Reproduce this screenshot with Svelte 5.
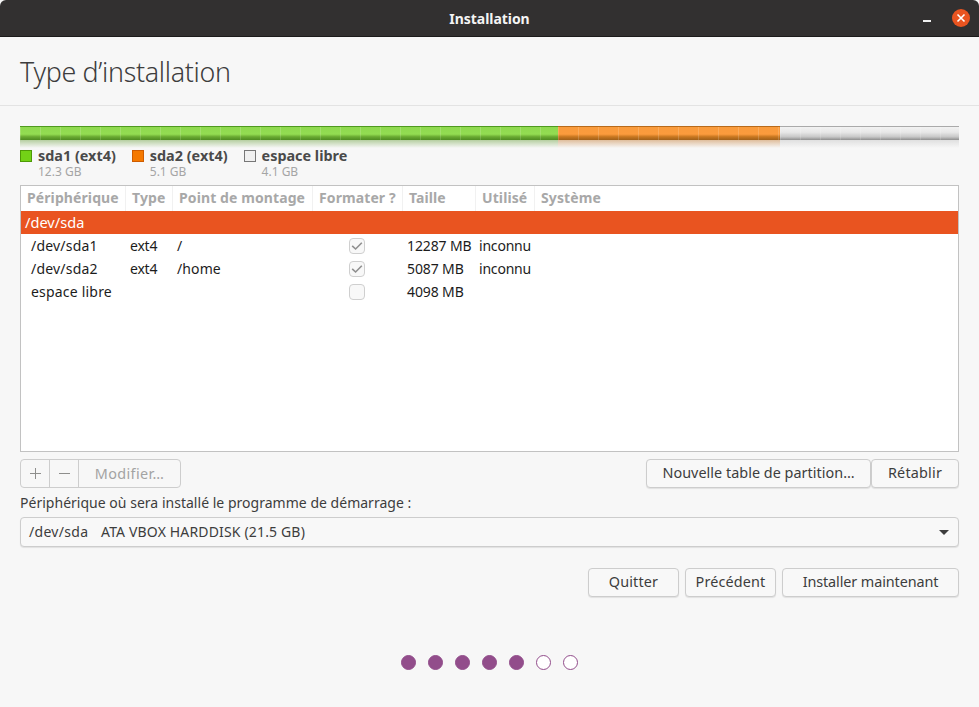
<script>
  const cols = ['Périphérique', 'Type', 'Point de montage', 'Formater ?', 'Taille', 'Utilisé', 'Système'];
  const rows = [
    { dev: '/dev/sda1', type: 'ext4', mount: '/', fmt: true, size: '12287 MB', used: 'inconnu' },
    { dev: '/dev/sda2', type: 'ext4', mount: '/home', fmt: true, size: '5087 MB', used: 'inconnu' },
    { dev: 'espace libre', type: '', mount: '', fmt: false, size: '4098 MB', used: '' }
  ];
  const legend = [
    { name: 'sda1 (ext4)', size: '12.3 GB', cls: 'green' },
    { name: 'sda2 (ext4)', size: '5.1 GB', cls: 'orange' },
    { name: 'espace libre', size: '4.1 GB', cls: 'free' }
  ];
  const dots = [1, 1, 1, 1, 1, 0, 0];
</script>

<div class="win">
  <header class="titlebar">
    <span class="wintitle">Installation</span>
    <span class="min"></span>
    <span class="close">
      <svg width="10" height="10" viewBox="0 0 10 10"><path d="M1.5 1.5l7 7M8.5 1.5l-7 7" stroke="#fff" stroke-width="1.6" fill="none"/></svg>
    </span>
  </header>

  <div class="heading"><h1>Type d’installation</h1></div>

  <main class="body">
    <div class="bar">
      <div class="seg g"></div>
      <div class="seg o"></div>
      <div class="seg f"></div>
    </div>

    <div class="legend">
      {#each legend as l}
        <div class="litem">
          <span class="swatch {l.cls}"></span>
          <div>
            <div class="lname">{l.name}</div>
            <div class="lsize">{l.size}</div>
          </div>
        </div>
      {/each}
    </div>

    <div class="table">
      <div class="thead row">
        {#each cols as c}<div class="th">{c}</div>{/each}
      </div>
      <div class="selected">/dev/sda</div>
      {#each rows as r}
        <div class="row tr">
          <div class="td dev">{r.dev}</div>
          <div class="td">{r.type}</div>
          <div class="td mount">{r.mount}</div>
          <div class="td chk">
            <span class="check">
              {#if r.fmt}<svg width="12" height="10" viewBox="0 0 12 10"><path d="M1.2 4.8l3.4 3.2L10.8 1.8" stroke="#8f8f8f" stroke-width="1.6" fill="none"/></svg>{/if}
            </span>
          </div>
          <div class="td size">{r.size}</div>
          <div class="td used">{r.used}</div>
          <div class="td"></div>
        </div>
      {/each}
    </div>

    <div class="tools">
      <div class="group">
        <span class="gbtn icon">
          <svg width="11" height="11" viewBox="0 0 11 11"><path d="M5.5 0v11M0 5.5h11" stroke="#8e8e8c" stroke-width="1"/></svg>
        </span>
        <span class="gbtn icon">
          <svg width="11" height="11" viewBox="0 0 11 11"><path d="M0 5.5h11" stroke="#8e8e8c" stroke-width="1"/></svg>
        </span>
        <span class="gbtn mod">Modifier…</span>
      </div>
      <div class="right">
        <button class="btn newtable">Nouvelle table de partition…</button>
        <button class="btn reset">Rétablir</button>
      </div>
    </div>

    <div class="bootlabel">Périphérique où sera installé le programme de démarrage :</div>
    <div class="combo">
      <span class="cdev">/dev/sda</span><span class="cname">ATA VBOX HARDDISK (21.5 GB)</span>
      <span class="arrow"></span>
    </div>

    <div class="actions">
      <button class="btn quit">Quitter</button>
      <button class="btn prev">Précédent</button>
      <button class="btn install">Installer maintenant</button>
    </div>

    <div class="dots">
      {#each dots as d}<span class="dot" class:on={d}></span>{/each}
    </div>
  </main>
</div>

<style>
  :global(body) { margin: 0; background: #f7f7f7; }
  .win {
    width: 979px; height: 707px; background: #f7f7f7; overflow: hidden;
    font-family: "Noto Sans", "Open Sans", sans-serif; font-size: 14px; color: #3d3d3d;
    display: flex; flex-direction: column;
  }
  .titlebar {
    height: 36px; flex: none; background: #323030; border-bottom: 1px solid #1c1b1b;
    border-radius: 6px 6px 0 0; display: flex; align-items: center; justify-content: center; position: relative;
  }
  .wintitle { color: #f4f4f4; font-weight: 700; font-size: 14px; letter-spacing: -0.05px; }
  .min { position: absolute; left: 923px; top: 20px; width: 8px; height: 1.5px; background: #f0f0f0; }
  .close {
    position: absolute; left: 952px; top: 9px; width: 18px; height: 18px; border-radius: 50%;
    background: #e95420; display: flex; align-items: center; justify-content: center;
  }
  .heading { height: 69px; flex: none; border-bottom: 1px solid #e3e3e3; box-sizing: border-box; display: flex; align-items: center; padding-left: 20px; }
  h1 { margin: 0; font-size: 26.8px; font-weight: 300; color: #3d3d3d; font-family: "Noto Sans", sans-serif; letter-spacing: -0.3px; white-space: nowrap; }
  .body { padding: 20px 20px 0; flex: 1; display: flex; flex-direction: column; }

  .bar { display: flex; height: 14px; position: relative; }
  .seg { height: 14px; position: relative; box-sizing: border-box; border-top: 1px solid; }
  .seg::before {
    content: ""; position: absolute; inset: 0;
    background: repeating-linear-gradient(90deg, rgba(255,255,255,.16) 0 1px, transparent 1px 20px);
  }
  .seg::after { content: ""; position: absolute; left: 0; right: 0; top: 13px; height: 8px; }
  .g { width: 538px; border-color: #4f9a1f; background: linear-gradient(#8fd94f 0, #93dc52 55%, #6aaa32 75%, #4f8c22 100%); }
  .g::after { background: linear-gradient(rgba(90,150,40,.42), rgba(120,200,60,0)); }
  .o { width: 222px; border-color: #b86a1a; background: linear-gradient(#f99b3c 0, #fb9b3d 55%, #c87720 75%, #a0601a 100%); }
  .o::after { background: linear-gradient(rgba(190,110,30,.42), rgba(240,140,50,0)); }
  .f { width: 179px; border-color: #aaa; background: linear-gradient(#f2f2f2 0, #e8e8e8 40%, #c8c8c8 75%, #8e8e8e 100%); }
  .f::after { background: linear-gradient(rgba(140,140,140,.22), rgba(200,200,200,0)); }

  .legend { display: flex; height: 45px; padding-top: 8px; box-sizing: border-box; line-height: 16px; }
  .litem { display: flex; gap: 6px; margin-right: 16px; }
  .swatch { width: 12px; height: 12px; box-sizing: border-box; border: 1px solid; margin-top: 2px; flex: none; }
  .green { background: #73d216; border-color: #4e9a06; }
  .orange { background: #f57900; border-color: #ce5c00; }
  .free { background: #f0f0f0; border-color: #777; }
  .lname { font-weight: 700; font-size: 14.4px; color: #4a4a4a; white-space: nowrap; }
  .lsize { font-size: 12px; color: #a5a5a5; }

  .table { height: 267px; box-sizing: border-box; flex: none; border: 1px solid #c2c2c2; background: #fff; }
  .row { display: grid; grid-template-columns: 105px 47px 140px 90px 73px 59px 1fr; }
  .thead { height: 25px; }
  .th { font-weight: 700; font-size: 14px; color: #a8a8a8; padding-left: 6px; line-height: 24px; border-right: 1px solid #f1f1f1; white-space: nowrap; letter-spacing: 0.1px; }
  .th:last-child { border-right: 0; }
  .selected { height: 23px; background: #e95420; color: #fff; line-height: 23px; padding-left: 4px; font-size: 14.6px; }
  .tr { height: 23px; }
  .td { line-height: 23px; color: #1c1c1c; padding-left: 4px; font-size: 14px; white-space: nowrap; letter-spacing: -0.2px; }
  .dev { padding-left: 10px; letter-spacing: 0.2px; }
  .mount { letter-spacing: 0.1px; }
  .size { letter-spacing: -0.12px; }
  .used { padding-left: 3px; }
  .chk { display: flex; align-items: center; justify-content: center; padding: 0; position: relative; left: -1px; }
  .check {
    width: 16px; height: 16px; box-sizing: border-box; border: 1px solid #cfcfcf; border-radius: 4px;
    background: #f8f8f8; display: flex; align-items: center; justify-content: center;
  }

  .tools { display: flex; justify-content: space-between; margin-top: 7px; height: 29px; }
  .group { display: flex; border: 1px solid #cdcdcd; border-radius: 4px; box-sizing: border-box; height: 29px; color: #a3a3a3; }
  .gbtn { display: flex; align-items: center; justify-content: center; }
  .icon { width: 29px; border-right: 1px solid #cdcdcd; box-sizing: border-box; }
  .mod { width: 101px; font-size: 14.4px; letter-spacing: 0.35px; }
  .right { display: flex; }
  .btn {
    font: inherit; font-size: 14.4px; color: #3d3d3d; height: 29px; padding: 0 0 2px; box-sizing: border-box; background: #f8f8f8;
    border: 1px solid #cdcdcd; border-radius: 4px; box-shadow: 0 1px 1px rgba(0,0,0,.09); white-space: nowrap;
  }
  .newtable { width: 225px; letter-spacing: 0.03px; }
  .reset { width: 88px; letter-spacing: 0.2px; }
  .bootlabel { margin-top: 6px; line-height: 18px; height: 20px; font-size: 14px; color: #3d3d3d; letter-spacing: 0.02px; }
  .combo {
    margin-top: 3px; height: 30px; box-sizing: border-box; border: 1px solid #cdcdcd; border-radius: 4px;
    background: #f8f8f8; box-shadow: 0 1px 1px rgba(0,0,0,.09); display: flex; align-items: center; padding: 0 0 2px 8px; position: relative;
  }
  .cdev { width: 72px; letter-spacing: 0.3px; }
  .cname { letter-spacing: 0.16px; }
  .arrow {
    position: absolute; right: 9px; top: 12px; width: 0; height: 0;
    border-left: 5px solid transparent; border-right: 5px solid transparent; border-top: 5px solid #3d3d3d;
  }
  .actions { display: flex; justify-content: flex-end; gap: 6px; margin-top: 21px; }
  .quit { width: 91px; letter-spacing: 0.15px; } .prev { width: 91px; letter-spacing: 0.15px; } .install { width: 177px; letter-spacing: -0.1px; }
  .dots { display: flex; justify-content: center; gap: 12px; margin-top: 58px; padding-right: 1px; }
  .dot { width: 15px; height: 15px; box-sizing: border-box; border-radius: 50%; border: 1px solid #924d8b; background: #fff; }
  .dot.on { background: #924d8b; }
</style>
